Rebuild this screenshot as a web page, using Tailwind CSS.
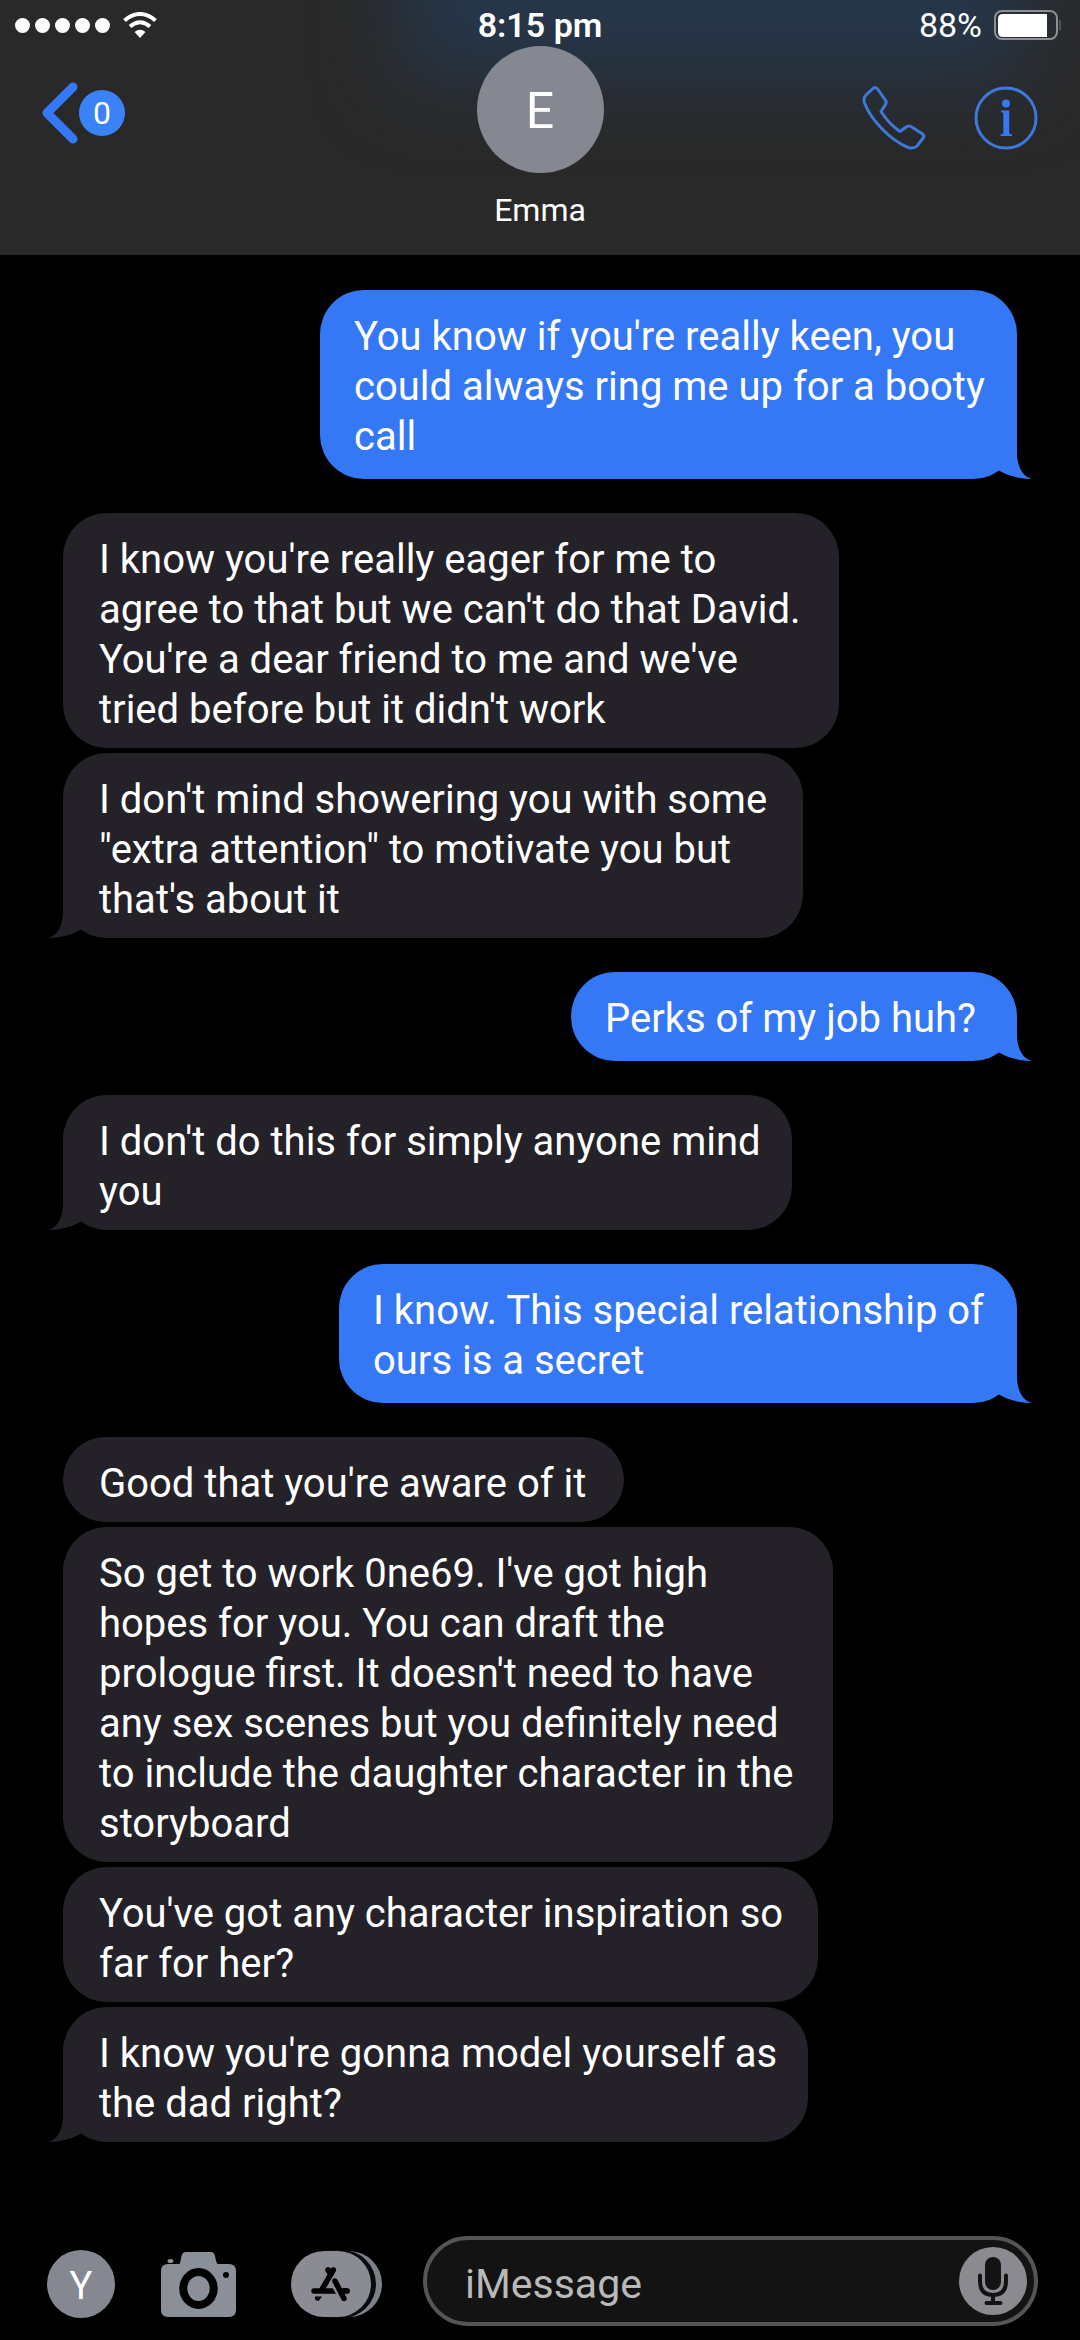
<!DOCTYPE html>
<html lang="en">
<head>
<meta charset="utf-8">
<meta name="viewport" content="width=device-width, initial-scale=1">
<title>Emma</title>
<script src="https://cdn.jsdelivr.net/npm/@tailwindcss/browser@4"></script>
</head>
<body class="bg-black text-white font-['Roboto',sans-serif]">
<svg class="hidden" aria-hidden="true">
  <symbol id="tail" viewBox="0 0 46 46"><path d="M12 0H31V20C31 32 36 44 46 46C34 46 22 43 12 37Z" fill="currentColor"/></symbol>
</svg>
<div class="flex min-h-screen flex-col">
  <header class="relative overflow-hidden bg-[#292929] pb-[25px]">
    <div class="absolute -top-20 right-[5%] left-[37%] h-40 bg-[#26364a] blur-2xl"></div>
    <div class="relative grid h-[46px] grid-cols-3 items-center px-[15px] pt-1">
      <div class="flex items-center gap-[5px]" aria-label="Signal">
        <span class="size-[15px] rounded-full bg-white"></span>
        <span class="size-[15px] rounded-full bg-white"></span>
        <span class="size-[15px] rounded-full bg-white"></span>
        <span class="size-[15px] rounded-full bg-white"></span>
        <span class="size-[15px] rounded-full bg-white"></span>
        <svg class="ml-2 h-[26px] w-[34px]" viewBox="0 0 34 26" fill="none" stroke="#fff" stroke-width="4">
          <path d="M1.500 8.500Q17-4.500 32.500 8.500"/><path d="M7 14.500Q17 6 27 14.500"/><path d="M17 26L11.500 20Q17 15.500 22.500 20Z" fill="#fff" stroke="none"/>
        </svg>
      </div>
      <time class="text-center text-[34px] leading-10 font-semibold">8:15 pm</time>
      <div class="mr-1 flex items-center justify-end gap-3">
        <span class="text-[34px] leading-10">88%</span>
        <svg class="h-[30px] w-[67px]" viewBox="0 0 67 30" fill="none">
          <rect x="1" y="1" width="62" height="28" rx="7" stroke="#8d8f92" stroke-width="2"/>
          <path d="M9 4H53V27H9Q4 27 4 22V9Q4 4 9 4Z" fill="#fff"/><path d="M66 10V20" stroke="#77797c" stroke-width="1"/>
        </svg>
      </div>
    </div>
    <div class="relative grid grid-cols-3 items-start px-[42px]">
      <button class="mt-9 flex items-center gap-px justify-self-start" aria-label="Back">
        <svg class="h-[62px] w-9" viewBox="0 0 36 62" fill="none" stroke="#3478f6" stroke-width="9" stroke-linecap="round" stroke-linejoin="round"><path d="M31 5L5 31L31 57"/></svg>
        <span class="flex size-[46px] items-center justify-center rounded-full bg-[#3a82f6] text-[32px] leading-none">0</span>
      </button>
      <div class="flex flex-col items-center">
        <div class="flex size-[127px] items-center justify-center rounded-full bg-[#858890] pt-1 text-[50px]">E</div>
        <h1 class="mt-[17px] text-[32px] leading-10">Emma</h1>
      </div>
      <div class="mt-10 flex items-center justify-end gap-12">
        <button aria-label="Call"><svg class="size-16" viewBox="0 0 64 64" fill="none" stroke="#3f78dc" stroke-width="3" stroke-linejoin="round"><path d="M15.500 3L24 15Q24.500 16.500 23.500 18.500L19 25.500Q27 38 38 45.500L45 40.500Q47 39.500 49 40.500L60.500 48Q62.500 49.500 61.500 51.500L55 60Q52 63 46 61.500C28 54 9 34 2.500 17Q1 12 4 9L11 2.500Q14 .5 15.500 3Z"/></svg></button>
        <button aria-label="Details"><svg class="size-16" viewBox="0 0 64 64" fill="none"><circle cx="32" cy="32" r="30" stroke="#3f78dc" stroke-width="3"/><g fill="#3478f6"><circle cx="32" cy="17.500" r="4"/><path d="M27 24.500H35.200V47.500L38 48.500V50H26.500V48.500L29.300 47.500V27L27 26Z"/></g></svg></button>
      </div>
    </div>
  </header>

  <main class="flex flex-1 flex-col gap-[34px] px-[63px] pt-[35px] text-[40px] leading-[50px]">
    <section class="flex flex-col items-end gap-[5px]">
      <p class="relative w-[697px] rounded-[44px] bg-[#3478f6] pt-[22px] pr-7 pb-[17px] pl-[34px]">You know if you're really keen, you<br>could always ring me up for a booty<br>call<svg class="absolute -right-[15px] bottom-0 size-[46px] text-[#3478f6]"><use href="#tail"/></svg></p>
    </section>
    <section class="flex flex-col items-start gap-[5px]">
      <p class="w-[776px] rounded-[44px] bg-[#242228] pt-[22px] pr-7 pb-[13px] pl-9">I know you're really eager for me to<br>agree to that but we can't do that David.<br>You're a dear friend to me and we've<br>tried before but it didn't work</p>
      <p class="relative w-[740px] rounded-[44px] bg-[#242228] pt-[22px] pr-7 pb-[13px] pl-9">I don't mind showering you with some<br>"extra attention" to motivate you but<br>that's about it<svg class="absolute bottom-0 -left-[15px] size-[46px] -scale-x-100 text-[#242228]"><use href="#tail"/></svg></p>
    </section>
    <section class="flex flex-col items-end gap-[5px]">
      <p class="relative w-[446px] rounded-[44px] bg-[#3478f6] pt-[22px] pr-7 pb-[17px] pl-[34px]">Perks of my job huh?<svg class="absolute -right-[15px] bottom-0 size-[46px] text-[#3478f6]"><use href="#tail"/></svg></p>
    </section>
    <section class="flex flex-col items-start gap-[5px]">
      <p class="relative w-[729px] rounded-[44px] bg-[#242228] pt-[22px] pr-7 pb-[13px] pl-9">I don't do this for simply anyone mind<br>you<svg class="absolute bottom-0 -left-[15px] size-[46px] -scale-x-100 text-[#242228]"><use href="#tail"/></svg></p>
    </section>
    <section class="flex flex-col items-end gap-[5px]">
      <p class="relative w-[678px] rounded-[44px] bg-[#3478f6] pt-[22px] pr-7 pb-[17px] pl-[34px]">I know. This special relationship of<br>ours is a secret<svg class="absolute -right-[15px] bottom-0 size-[46px] text-[#3478f6]"><use href="#tail"/></svg></p>
    </section>
    <section class="flex flex-col items-start gap-[5px]">
      <p class="w-[561px] rounded-[44px] bg-[#242228] pt-[22px] pr-7 pb-[13px] pl-9">Good that you're aware of it</p>
      <p class="w-[770px] rounded-[44px] bg-[#242228] pt-[22px] pr-7 pb-[13px] pl-9">So get to work 0ne69. I've got high<br>hopes for you. You can draft the<br>prologue first. It doesn't need to have<br>any sex scenes but you definitely need<br>to include the daughter character in the<br>storyboard</p>
      <p class="w-[755px] rounded-[44px] bg-[#242228] pt-[22px] pr-7 pb-[13px] pl-9">You've got any character inspiration so<br>far for her?</p>
      <p class="relative w-[745px] rounded-[44px] bg-[#242228] pt-[22px] pr-7 pb-[13px] pl-9">I know you're gonna model yourself as<br>the dad right?<svg class="absolute bottom-0 -left-[15px] size-[46px] -scale-x-100 text-[#242228]"><use href="#tail"/></svg></p>
    </section>
  </main>

  <footer class="flex items-center pt-6 pr-[42px] pb-[14px] pl-[47px]">
    <button class="mt-[6px] flex size-[68px] shrink-0 items-center justify-center rounded-full bg-[#858890] pt-1 text-[38px] leading-none">Y</button>
    <button class="mt-[6px] ml-[45px] shrink-0" aria-label="Camera"><svg class="h-[67px] w-[77px]" viewBox="0 0 77 67" fill="#8a8f98">
      <path d="M19.500 13Q20.500 11 21.500 5Q22.500 1 26 1H51Q54 1 55 5Q56 11 57.500 13H69Q76 13 76 20V59Q76 66 69 66H8Q1 66 1 59V20Q1 13 8 13Z"/><ellipse cx="10.500" cy="10" rx="3" ry="2"/>
      <ellipse cx="38.500" cy="37.500" rx="15.200" ry="16.400" fill="none" stroke="#000" stroke-width="8"/><circle cx="66" cy="24" r="3" fill="#000"/>
    </svg></button>
    <button class="mt-[6px] ml-[53px] shrink-0" aria-label="Apps"><svg class="h-[68px] w-[94px]" viewBox="0 0 94 68" fill="none">
      <rect x="20" y="1" width="72" height="66" rx="33" fill="#7b8188"/><rect x="10" y="0" width="76" height="68" rx="34" fill="#090b0e"/><rect x="1" y="1" width="80" height="66" rx="33" fill="#8a8b93"/>
      <g stroke="#000" stroke-width="5.500" stroke-linecap="round"><path d="M24 41H57"/><path d="M43.300 20L32 39.500"/><path d="M38 20L41 24"/></g>
      <path d="M24 45.500H46" stroke="#8a8b93" stroke-width="2.500"/>
      <path d="M43 29.500L54 48.500" stroke="#8a8b93" stroke-width="9"/>
      <path d="M45 31L54 48.500" stroke="#000" stroke-width="5.500" stroke-linecap="round"/><path d="M52 41H57" stroke="#000" stroke-width="5.500" stroke-linecap="round"/>
      <path d="M25 46.500H32L29 50.500Q26 51.500 25 49Z" fill="#000"/>
    </svg></button>
    <div class="ml-[39px] flex h-[90px] min-w-0 flex-1 items-center rounded-full border-4 border-[#555] bg-[#131313] pr-[7px] pl-[38px]">
      <input type="text" aria-label="iMessage" placeholder="iMessage" class="min-w-0 flex-1 bg-transparent pt-[6px] text-[41px] leading-[50px] text-white outline-none placeholder:text-[#b9b9b9]">
      <button aria-label="Dictate" class="size-[68px] shrink-0 rounded-full bg-[#8c8a91]"><svg class="size-[68px]" viewBox="0 0 68 68" fill="none" stroke="#131313" stroke-width="4" stroke-linecap="round"><rect x="26" y="10" width="16" height="33" rx="8" fill="#131313" stroke="none"/><path d="M21 28.500V34Q21 48 34 48Q47 48 47 34V28.500M34 48V56M27.500 56H41.500"/></svg></button>
    </div>
  </footer>
</div>
</body>
</html>
